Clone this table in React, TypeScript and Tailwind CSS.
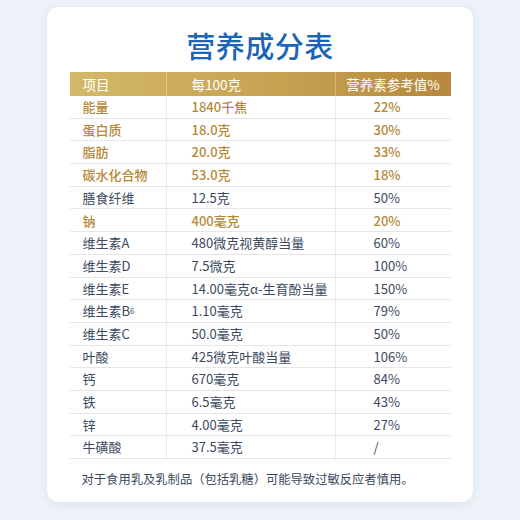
import React from 'react';

type Row = { name: React.ReactNode; amount: string; nrv: string; gold?: boolean };

const rows: Row[] = [
  { name: '能量', amount: '1840千焦', nrv: '22%', gold: true },
  { name: '蛋白质', amount: '18.0克', nrv: '30%', gold: true },
  { name: '脂肪', amount: '20.0克', nrv: '33%', gold: true },
  { name: '碳水化合物', amount: '53.0克', nrv: '18%', gold: true },
  { name: '膳食纤维', amount: '12.5克', nrv: '50%' },
  { name: '钠', amount: '400毫克', nrv: '20%', gold: true },
  { name: '维生素A', amount: '480微克视黄醇当量', nrv: '60%' },
  { name: '维生素D', amount: '7.5微克', nrv: '100%' },
  { name: '维生素E', amount: '14.00毫克α-生育酚当量', nrv: '150%' },
  {
    name: (
      <>
        维生素B<span className="text-[8px] align-[-2px]">6</span>
      </>
    ),
    amount: '1.10毫克',
    nrv: '79%',
  },
  { name: '维生素C', amount: '50.0毫克', nrv: '50%' },
  { name: '叶酸', amount: '425微克叶酸当量', nrv: '106%' },
  { name: '钙', amount: '670毫克', nrv: '84%' },
  { name: '铁', amount: '6.5毫克', nrv: '43%' },
  { name: '锌', amount: '4.00毫克', nrv: '27%' },
  { name: '牛磺酸', amount: '37.5毫克', nrv: '/' },
];

const App: React.FC = () => {
  return (
    <div
      className="w-[520px] h-[520px] bg-[#eef3f9] pt-[7px] pl-[47px]"
      style={{ fontFamily: '"Noto Sans CJK SC", "Noto Sans", sans-serif' }}
    >
      <div className="w-[426px] h-[495px] bg-white rounded-[12px] shadow-[0_2px_10px_rgba(120,145,180,0.18)] flex flex-col items-center">
        {/* 标题 */}
        <h1 className="mt-[20px] h-[36px] leading-[36px] text-[29px] font-medium text-[#1c64b6] tracking-[0.5px]">
          营养成分表
        </h1>

        {/* 表格 */}
        <div className="mt-[9px] w-[381px] text-[13px]">
          <div className="flex h-[24px] items-center text-white text-[13.5px] bg-gradient-to-r from-[#d3b86b] via-[#c7a453] to-[#b6883d]">
            <div className="w-[97px] pl-[13px] h-full flex items-center border-r border-white/30">项目</div>
            <div className="w-[169px] pl-[25px] h-full flex items-center border-r border-white/30">每100克</div>
            <div className="flex-1 h-full flex items-center justify-center">营养素参考值%</div>
          </div>
          {rows.map((r, i) => (
            <div
              key={i}
              className={`flex h-[22.7px] items-center border-b border-[#e6e6e6] ${
                r.gold ? 'text-[#b58838] font-medium' : 'text-[#3b4a60]'
              }`}
            >
              <div className="w-[97px] pl-[13px] h-full flex items-center border-r border-[#ececec] whitespace-nowrap">
                {r.name}
              </div>
              <div className="w-[169px] pl-[25px] h-full flex items-center border-r border-[#ececec] whitespace-nowrap">
                {r.amount}
              </div>
              <div className="flex-1 pl-[38px] h-full flex items-center">{r.nrv}</div>
            </div>
          ))}
        </div>

        {/* 备注 */}
        <p className="mt-[11px] w-[381px] pl-[12px] text-[12.3px] text-[#3b4a60] whitespace-nowrap">
          对于食用乳及乳制品（包括乳糖）可能导致过敏反应者慎用。
        </p>
      </div>
    </div>
  );
};

export default App;
